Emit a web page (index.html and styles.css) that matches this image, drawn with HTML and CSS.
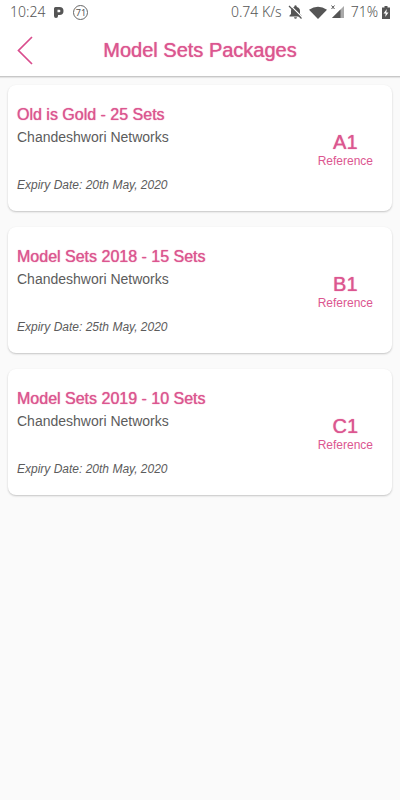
FILE: index.html
```html
<!DOCTYPE html>
<html lang="en">
<head>
<meta charset="utf-8">
<meta name="viewport" content="width=device-width, initial-scale=1">
<title>Model Sets Packages</title>
<link rel="stylesheet" href="styles.css">
</head>
<body>
<header class="top">
  <div class="status">
    <div class="status-side">
      <span>10:24</span>
      <svg class="p-icon" width="10" height="12" viewBox="0 0 10 12" aria-hidden="true"><path fill-rule="evenodd" d="M1.500 1H5.500A4 4 0 0 1 5.500 9H4V10A2 2 0 0 1 0 10V2.500Q0 1 1.500 1ZM3.500 3.800V6.200H5.200A1.200 1.200 0 0 0 5.200 3.800Z" fill="#555"/></svg>
      <span class="ring">71</span>
    </div>
    <div class="status-side status-right">
      <span>0.74 K/s</span>
      <svg class="bell" width="15" height="14" viewBox="0 0 15 14" aria-hidden="true"><path d="M1.500 11.500V10.500L3 9V6Q3 2.800 6.300 2V1Q7.500-.3 8.700 1V2Q12 2.800 12 6V9L13.500 10.500V11.500ZM6 12.200H9Q8.700 13.800 7.500 13.800T6 12.200Z" fill="#555"/><path d="M2.200.3L14.500 12.500" stroke="#fff" stroke-width="1.200"/><path d="M1 1L13.500 13.500" stroke="#555" stroke-width="1.200"/></svg>
      <svg class="wifi" width="18" height="13" viewBox="0 0 18 13" aria-hidden="true"><path d="M0 3.800Q9-2.500 18 3.800L9 13Z" fill="#555"/></svg>
      <svg class="signal" width="13" height="14" viewBox="0 0 13 14" aria-hidden="true"><path d="M1 13L13 1V13Z" fill="#aaa"/><path d="M1 13L9.500 4.500V13Z" fill="#555"/><path d="M.5.500L3.500 4M3.500.5L.5 4" stroke="#555"/></svg>
      <span class="level">71%</span>
      <svg width="8" height="13" viewBox="0 0 8 13" aria-hidden="true"><path d="M2.500 0H5.500V1.500H8V13H0V1.500H2.500Z" fill="#555"/><path d="M4.800 3L1.500 7.500H3.700L3.200 11L6.500 6.500H4.300Z" fill="#fff"/></svg>
    </div>
  </div>
  <div class="bar">
    <button class="back" type="button" aria-label="Back"><svg width="18" height="30" viewBox="0 0 18 30" aria-hidden="true"><path d="M16 2L2.500 15.500L16 29" fill="none" stroke="#d94d8d" stroke-width="1.700"/></svg></button>
    <h1>Model Sets Packages</h1>
  </div>
</header>
<main class="list">
  <article class="card">
    <div>
      <h2>Old is Gold - 25 Sets</h2>
      <p class="vendor">Chandeshwori Networks</p>
      <p class="expiry">Expiry Date: 20th May, 2020</p>
    </div>
    <div class="ref"><strong>A1</strong><span>Reference</span></div>
  </article>
  <article class="card">
    <div>
      <h2>Model Sets 2018 - 15 Sets</h2>
      <p class="vendor">Chandeshwori Networks</p>
      <p class="expiry">Expiry Date: 25th May, 2020</p>
    </div>
    <div class="ref"><strong>B1</strong><span>Reference</span></div>
  </article>
  <article class="card">
    <div>
      <h2>Model Sets 2019 - 10 Sets</h2>
      <p class="vendor">Chandeshwori Networks</p>
      <p class="expiry">Expiry Date: 20th May, 2020</p>
    </div>
    <div class="ref"><strong>C1</strong><span>Reference</span></div>
  </article>
</main>
</body>
</html>
```
FILE: styles.css
```css
* { box-sizing: border-box; }
body {
  margin: 0;
  min-height: 100vh;
  background: #fafafa;
  color: #5c5c5c;
  font-family: "Liberation Sans", Arial, sans-serif;
}
h1, h2, p { margin: 0; }
h1, h2, .ref { color: #dc5690; }
h1, h2, .ref strong {
  font-weight: 400;
  text-shadow: 0 0 1px currentColor;
}
.top {
  background: #fff;
  border-bottom: 1px solid #c8c8c8;
  box-shadow: 0 1px 1px #e4e4e4;
}
.status {
  display: flex;
  justify-content: space-between;
  height: 24px;
  padding: 0 10px;
  color: #555;
  font: 300 14px/24px "Noto Sans", "Open Sans", sans-serif;
}
.status-side { display: flex; align-items: center; }
.p-icon { margin: 0 9px; }
.ring {
  width: 15px;
  height: 15px;
  border: 1px solid #666;
  border-radius: 50%;
  font: 400 9px/13px "Noto Sans", sans-serif;
  text-align: center;
}
.bell { margin: 0 6px; }
.signal { margin: 0 7px 0 4px; }
.level { margin-right: 4px; }
.bar {
  display: grid;
  grid-template-columns: 50px 1fr 50px;
  align-items: center;
  height: 52px;
}
.back {
  display: flex;
  justify-content: center;
  padding: 0;
  border: 0;
  background: none;
}
h1 { font-size: 20px; line-height: 24px; text-align: center; }
.list {
  display: grid;
  gap: 16px;
  padding: 8px;
}
.card {
  display: flex;
  justify-content: space-between;
  align-items: center;
  padding: 20px 19px 16px 9px;
  border-radius: 8px;
  background: #fff;
  box-shadow: 0 1px 2px #c4c4c4;
}
h2 { font-size: 16px; line-height: 20px; }
.vendor { font-size: 14px; line-height: 24px; }
.expiry {
  margin-top: 26px;
  font-size: 12px;
  font-style: italic;
  line-height: 20px;
}
.ref { display: grid; text-align: center; }
.ref strong { font-size: 20px; line-height: 22px; }
.ref span { font-size: 12px; line-height: 16px; }
```
